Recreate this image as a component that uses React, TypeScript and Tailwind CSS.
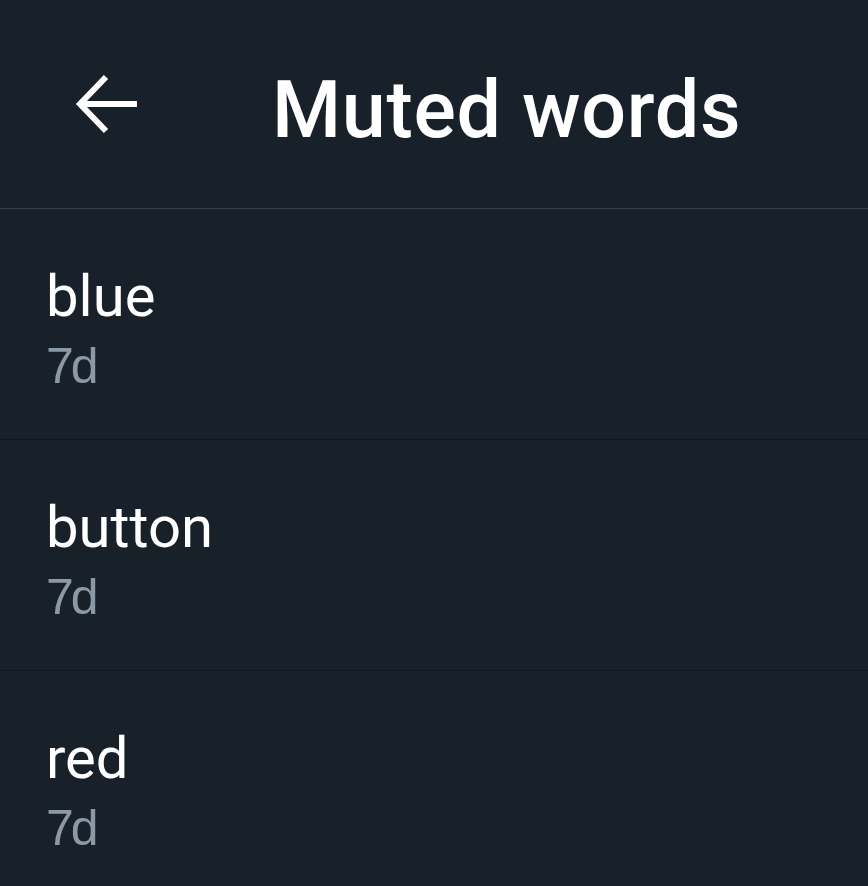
import React from "react";

const items = ["blue", "button", "red"];

export default function App() {
  return (
    <div className="w-[868px] h-[886px] overflow-hidden bg-[#18202a]" style={{ fontFamily: "Roboto, 'Noto Sans', sans-serif" }}>
      <div className="h-[209px] flex items-center border-b border-[#38414b]">
        <div className="w-[272px] flex items-center pl-[75px]">
          <svg width="62" height="60" viewBox="0 0 62 60" fill="none" stroke="white" strokeWidth="6" strokeLinecap="butt">
            <path d="M62 30H5" />
            <path d="M31 3L5 30L31 57" />
          </svg>
        </div>
        <div className="text-white text-[79px] font-medium leading-none pt-[12px] tracking-[0.7px]">Muted words</div>
      </div>
      {items.map((w, i) => (
        <div key={w} className={"h-[231px] flex flex-col pt-[54px] pl-[46px] " + (i < 2 ? "border-b border-[#10161d]" : "")}>
          <div className="text-white text-[58px] leading-[66px]">{w}</div>
          <div className="mt-[7px] text-[#8b98a5] text-[50px] leading-[60px] tracking-[-3px]" style={{ fontFamily: "'Liberation Sans', Arial, sans-serif" }}>7d</div>
        </div>
      ))}
    </div>
  );
}
